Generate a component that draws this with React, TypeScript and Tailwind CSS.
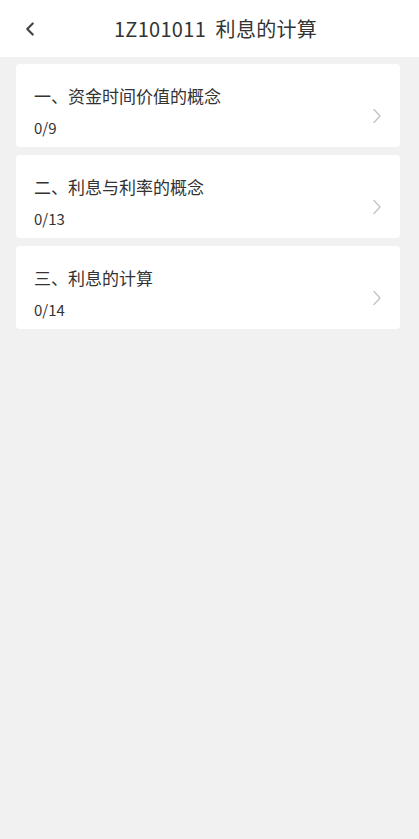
import { ChevronLeft } from 'lucide-react'

const sections = [
  { title: '一、资金时间价值的概念', progress: '0/9' },
  { title: '二、利息与利率的概念', progress: '0/13' },
  { title: '三、利息的计算', progress: '0/14' },
]

function Chevron() {
  return (
    <svg width="10" height="16" viewBox="0 0 10 16" fill="none">
      <path d="M2 1.5 L8 8 L2 14.5" stroke="#c4c4c4" strokeWidth="1.4" strokeLinecap="round" strokeLinejoin="round" />
    </svg>
  )
}

export default function App() {
  return (
    <div
      className="min-h-[839px] w-full bg-[#f1f1f1] text-[#333]"
      style={{ fontFamily: '"Noto Sans CJK SC", "Noto Sans", sans-serif' }}
    >
      {/* Header */}
      <header className="relative h-[57px] bg-white flex items-center justify-center">
        <button className="absolute left-[19px] top-[18px] text-[#444]">
          <ChevronLeft size={22} strokeWidth={2.4} />
        </button>
        <h1 className="text-[20px] font-normal tracking-[0.3px] ml-[12px]">1Z101011&nbsp;&nbsp;利息的计算</h1>
      </header>

      {/* Sections */}
      <main className="pl-4 pr-[19px] pt-[7px] flex flex-col gap-[8px]">
        {sections.map((s) => (
          <div
            key={s.title}
            className="h-[83px] bg-white rounded-[4px] pl-[18px] pr-[18px] pt-[20px] flex items-start justify-between"
          >
            <div className="flex flex-col">
              <p className="text-[17px] leading-[24px]">{s.title}</p>
              <p className="text-[15px] leading-[20px] mt-[10px]">{s.progress}</p>
            </div>
            <div className="pt-[24px]">
              <Chevron />
            </div>
          </div>
        ))}
      </main>
    </div>
  )
}
